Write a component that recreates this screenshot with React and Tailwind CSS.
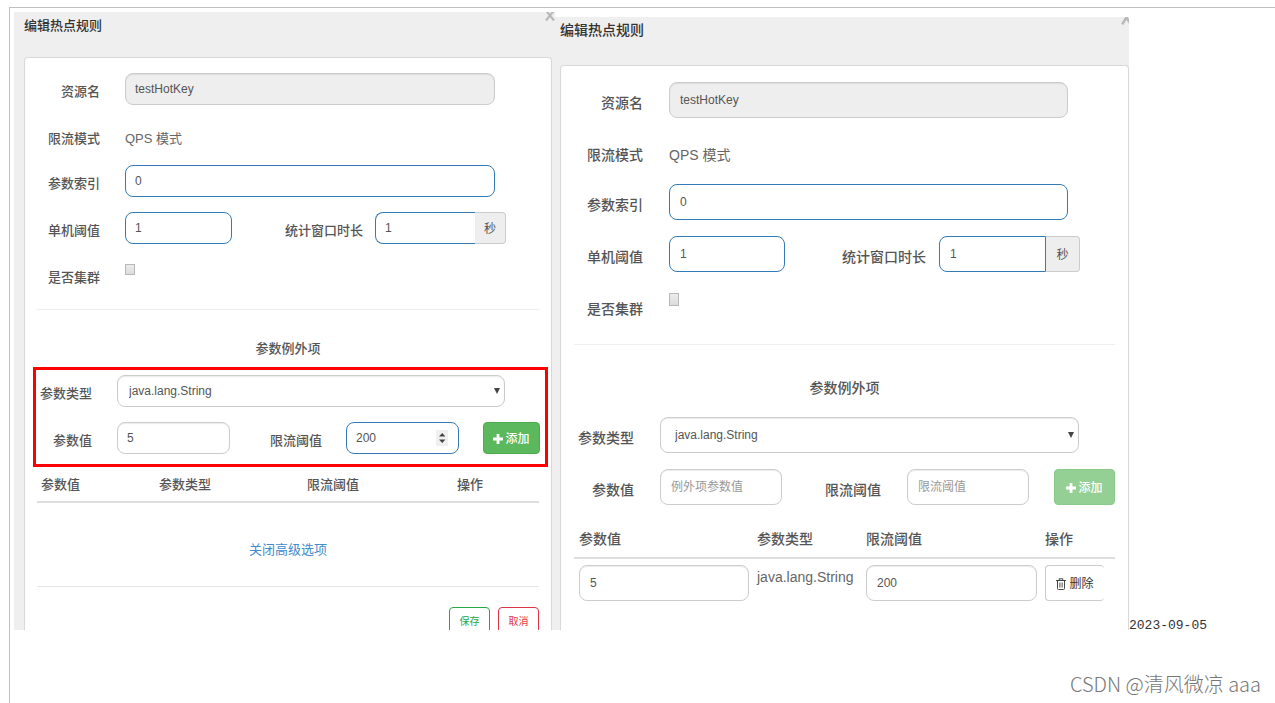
// ============================================================================
// Hot-spot parameter rule dialogs
// File: App.jsx
// ============================================================================

import React, { useId, useState } from 'react';
import clsx from 'clsx';

// Class sets for the two dialog densities
const compact = {
  label: 'pt-[9px] text-[13px]',
  field: 'h-8 px-[9px]',
  rows: 'gap-[15px]',
  textRow: 'h-[30px]',
  labelCol: 'w-[63px]',
  labelGap: 'gap-[25px]',
  endPad: 'pr-11',
  thresholdPad: 'pr-[33px]',
  threshold: 'basis-[195px]',
  windowLabel: 'w-[131px] mr-3',
  windowGroup: 'basis-[131px]',
  addon: 'w-[31px]',
  checkbox: 'mt-[5px] h-[11px] w-[10px]',
  windowInput: 'border-r-0',
};

const regular = {
  label: 'pt-[11px] text-sm',
  field: 'h-9 px-[10px]',
  rows: 'gap-4',
  textRow: 'h-[34px]',
  labelCol: 'w-[69px]',
  labelGap: 'gap-[26px]',
  endPad: 'pr-[47px]',
  thresholdPad: 'pr-[35px]',
  threshold: 'basis-[211px]',
  windowLabel: 'w-[141px] mr-[13px]',
  windowGroup: 'basis-[141px]',
  addon: 'w-[34px]',
  checkbox: 'mt-[5px] h-[13px] w-[10px]',
  windowInput: '',
};

function PlusIcon() {
  return (
    <svg className="h-[10px] w-[10px] shrink-0" viewBox="0 0 10 10" fill="currentColor" aria-hidden="true">
      <path d="M3.6 0h2.8v3.6H10v2.8H6.4V10H3.6V6.4H0V3.6h3.6z" />
    </svg>
  );
}

function TrashIcon() {
  return (
    <svg
      className="h-3 w-[10px] shrink-0"
      viewBox="0 0 10 12"
      fill="none"
      stroke="currentColor"
      strokeWidth="0.9"
      aria-hidden="true"
    >
      <path d="M0 2.5h10M3.2 2.3V.8h3.6v1.5M1.5 2.5v8q0 1 1 1h5q1 0 1-1v-8" />
      <path d="M3.6 4.5v5M5 4.5v5M6.4 4.5v5" strokeWidth="0.6" />
    </svg>
  );
}

function CloseIcon({ className }) {
  return (
    <svg
      className={className}
      viewBox="0 0 10 11"
      preserveAspectRatio="none"
      fill="none"
      stroke="#b9b9b9"
      strokeWidth="2.2"
      aria-hidden="true"
    >
      <path d="M1 0.5l8 10M9 0.5l-8 10" />
    </svg>
  );
}

function Field({ className, active, ...props }) {
  return (
    <input
      type="text"
      className={clsx(
        'block min-w-0 rounded-lg border text-xs text-[#555] outline-none placeholder:text-[#999]',
        active ? 'border-[#337ab7]' : 'border-[#ccc] shadow-[inset_0_1px_1px_rgba(0,0,0,0.08)]',
        props.disabled ? 'bg-[#eee]' : 'bg-white',
        className
      )}
      {...props}
    />
  );
}

function Label({ className, ...props }) {
  return (
    <label
      className={clsx('block shrink-0 text-right leading-5 font-medium whitespace-nowrap text-[#555]', className)}
      {...props}
    />
  );
}

function TypeSelect({ id, className }) {
  return (
    <div className="relative min-w-0 flex-1">
      <select
        id={id}
        className={clsx(
          'block w-full appearance-none rounded-lg border border-[#ccc] bg-white text-xs text-[#555] shadow-[inset_0_1px_1px_rgba(0,0,0,0.08)] outline-none',
          className
        )}
      >
        <option>java.lang.String</option>
        <option>int</option>
        <option>double</option>
      </select>
      <svg
        className="pointer-events-none absolute top-1/2 right-[5px] -mt-[3px] h-[6px] w-[6px]"
        viewBox="0 0 6 6"
        fill="#444"
        aria-hidden="true"
      >
        <path d="M0 0h6L3 6z" />
      </svg>
    </div>
  );
}

function AddButton({ className, ...props }) {
  return (
    <button
      type="button"
      className={clsx(
        'flex shrink-0 items-center justify-center gap-[2px] rounded border border-[#4cae4c] bg-[#5cb85c] pt-[2px] text-xs font-medium text-white disabled:opacity-65',
        className
      )}
      {...props}
    >
      <PlusIcon />
      添加
    </button>
  );
}

// Resource, mode, index, threshold and cluster rows
function RuleFields({ s }) {
  const id = useId();
  const [cluster, setCluster] = useState(false);
  const labelClass = clsx(s.label, s.labelCol);

  return (
    <div className={clsx('flex flex-col', s.rows)}>
      <div className={clsx('flex', s.labelGap, s.endPad)}>
        <Label htmlFor={`${id}-resource`} className={labelClass}>资源名</Label>
        <Field id={`${id}-resource`} defaultValue="testHotKey" disabled className={clsx('flex-1', s.field)} />
      </div>
      <div className={clsx('flex', s.labelGap, s.textRow)}>
        <span className={clsx('block shrink-0 text-right leading-5 font-medium text-[#555]', labelClass)}>限流模式</span>
        <span className={clsx('leading-5 text-[#666]', s.label)}>QPS 模式</span>
      </div>
      <div className={clsx('flex', s.labelGap, s.endPad)}>
        <Label htmlFor={`${id}-index`} className={labelClass}>参数索引</Label>
        <Field id={`${id}-index`} defaultValue="0" active className={clsx('flex-1', s.field)} />
      </div>
      <div className={clsx('flex', s.thresholdPad)}>
        <div className={clsx('flex min-w-0 grow', s.threshold, s.labelGap)}>
          <Label htmlFor={`${id}-count`} className={labelClass}>单机阈值</Label>
          <Field id={`${id}-count`} defaultValue="1" active className={clsx('w-0 flex-1', s.field)} />
        </div>
        <Label htmlFor={`${id}-window`} className={clsx(s.label, s.windowLabel)}>统计窗口时长</Label>
        <div className={clsx('flex min-w-0 grow', s.windowGroup)}>
          <Field
            id={`${id}-window`}
            defaultValue="1"
            active
            className={clsx('w-0 flex-1 rounded-r-none', s.field, s.windowInput)}
          />
          <span
            className={clsx(
              'flex shrink-0 items-center justify-center rounded-r border border-l-0 border-[#ccc] bg-[#eee] pt-[2px] text-xs text-[#555]',
              s.addon
            )}
          >
            秒
          </span>
        </div>
      </div>
      <div className={clsx('flex items-start', s.labelGap, s.textRow)}>
        <Label htmlFor={`${id}-cluster`} className={labelClass}>是否集群</Label>
        <input
          id={`${id}-cluster`}
          type="checkbox"
          checked={cluster}
          onChange={(e) => setCluster(e.target.checked)}
          className={clsx(
            'appearance-none border border-[#b8b8b8] bg-linear-to-b from-[#ececec] to-[#dcdcdc] checked:bg-[#337ab7]',
            s.checkbox
          )}
        />
      </div>
    </div>
  );
}

function EditingDialog() {
  const id = useId();
  const s = compact;

  return (
    <section className="relative min-w-0 flex-[528] overflow-hidden bg-[#efefef] pr-[3px] pl-[10px]">
      <button type="button" aria-label="关闭" className="absolute top-0 right-0">
        <CloseIcon className="-mt-[2px] block h-[11px] w-[10px]" />
      </button>
      <h2 className="pt-1 pb-[21px] text-[13px] leading-5 font-medium text-[#333]">编辑热点规则</h2>

      <div className="rounded-t border border-b-0 border-[#d8d8d8] bg-white px-3 pt-[15px]">
        <RuleFields s={s} />
        <hr className="mt-5 border-[#eee]" />
        <h3 className="mt-[29px] text-center text-[13px] leading-5 font-medium text-[#555]">参数例外项</h3>

        <div className="mt-2 -mr-[9px] -ml-1 flex flex-col gap-[15px] border-[3px] border-[#f00] pt-[5px] pb-[10px]">
          <div className="flex gap-[25px] pr-10">
            <Label htmlFor={`${id}-type`} className={clsx('w-14', s.label)}>参数类型</Label>
            <TypeSelect id={`${id}-type`} className="h-8 pl-[11px]" />
          </div>
          <div className="flex pr-[5px]">
            <Label htmlFor={`${id}-value`} className={clsx('mr-[25px] w-14', s.label)}>参数值</Label>
            <div className="min-w-0 flex-1">
              <Field id={`${id}-value`} defaultValue="5" className={clsx('w-full', s.field)} />
            </div>
            <Label htmlFor={`${id}-limit`} className={clsx('mr-6 w-[92px]', s.label)}>限流阈值</Label>
            <div className="relative min-w-0 flex-1">
              <Field id={`${id}-limit`} defaultValue="200" inputMode="numeric" active className={clsx('w-full', s.field)} />
              <svg
                className="pointer-events-none absolute top-2 right-[11px] h-4 w-3"
                viewBox="0 0 12 16"
                aria-hidden="true"
              >
                <path d="M0 0h12v16H0z" fill="#f0f0f0" />
                <path d="M3 6.5h6.4L6.2 3zM3 9.5h6.4L6.2 13z" fill="#444" />
              </svg>
            </div>
            <AddButton className="ml-6 h-8 w-[57px]" />
          </div>
        </div>

        <table className="mt-2 w-full table-fixed text-left text-[13px] leading-5 text-[#555]">
          <thead>
            <tr className="border-b-2 border-[#ddd]">
              <th className="w-[118px] px-1 pb-[6px] font-medium">参数值</th>
              <th className="w-[148px] px-1 pb-[6px] font-medium">参数类型</th>
              <th className="w-[150px] px-1 pb-[6px] font-medium">限流阈值</th>
              <th className="w-[86px] px-1 pb-[6px] font-medium">操作</th>
            </tr>
          </thead>
        </table>

        <p className="mt-[37px] text-center text-[13px] leading-5">
          <a href="#advanced" className="text-[#428bca]">关闭高级选项</a>
        </p>
        <hr className="mt-[26px] border-[#e5e5e5]" />

        <footer className="mt-5 flex h-[23px] items-start justify-end gap-2 overflow-hidden">
          <button type="button" className="h-7 w-[41px] rounded border border-[#28a745] text-[10px] text-[#28a745]">
            保存
          </button>
          <button type="button" className="h-7 w-[41px] rounded border border-[#dc3545] text-[10px] text-[#dc3545]">
            取消
          </button>
        </footer>
      </div>
    </section>
  );
}

function AddedDialog() {
  const id = useId();
  const s = regular;

  return (
    <section className="relative mt-[5px] flex min-w-0 flex-[569] flex-col overflow-hidden bg-[#efefef] pl-[5px]">
      <button type="button" aria-label="关闭" className="absolute top-0 -right-[3px]">
        <CloseIcon className="-mt-[7px] block h-[15px] w-[11px]" />
      </button>
      <h2 className="pt-[3px] pb-[25px] text-sm leading-5 font-medium text-[#333]">编辑热点规则</h2>

      <div className="flex-1 rounded-t border border-b-0 border-[#d8d8d8] bg-white px-[13px] pt-4">
        <RuleFields s={s} />
        <hr className="mt-[22px] border-[#eee]" />
        <h3 className="mt-[33px] text-center text-sm leading-5 font-medium text-[#555]">参数例外项</h3>

        <div className="mt-[19px] flex flex-col gap-4">
          <div className="flex gap-[26px] pr-9">
            <Label htmlFor={`${id}-type`} className={clsx('w-[60px]', s.label)}>参数类型</Label>
            <TypeSelect id={`${id}-type`} className="h-9 pl-[14px]" />
          </div>
          <div className="flex">
            <Label htmlFor={`${id}-value`} className={clsx('mr-[26px] w-[60px]', s.label)}>参数值</Label>
            <Field id={`${id}-value`} placeholder="例外项参数值" className={clsx('w-0 flex-1', s.field)} />
            <Label htmlFor={`${id}-limit`} className={clsx('mr-[26px] w-[99px]', s.label)}>限流阈值</Label>
            <Field id={`${id}-limit`} placeholder="限流阈值" className={clsx('w-0 flex-1', s.field)} />
            <AddButton disabled className="ml-[25px] h-9 w-[61px]" />
          </div>
        </div>

        <table className="mt-6 w-full table-fixed text-left text-sm leading-5 text-[#555]">
          <thead>
            <tr className="border-b-2 border-[#ddd]">
              <th className="w-[178px] px-[5px] pb-2 font-medium">参数值</th>
              <th className="w-[109px] px-[5px] pb-2 font-medium">参数类型</th>
              <th className="w-[179px] px-[5px] pb-2 font-medium">限流阈值</th>
              <th className="w-[75px] px-[5px] pb-2 font-medium">操作</th>
            </tr>
          </thead>
          <tbody>
            <tr className="align-top">
              <td className="pt-[6px] pr-[3px] pl-[5px]">
                <Field aria-label="参数值" defaultValue="5" className={clsx('w-full', s.field)} />
              </td>
              <td className="px-[5px] pt-2 whitespace-nowrap text-[#666]">java.lang.String</td>
              <td className="pt-[6px] pr-[3px] pl-[5px]">
                <Field aria-label="限流阈值" defaultValue="200" className={clsx('w-full', s.field)} />
              </td>
              <td className="pt-[6px] pr-[11px] pl-[5px]">
                <button
                  type="button"
                  className="flex h-9 w-full items-center justify-center gap-[3px] rounded border border-r-0 border-[#ccc] pt-[2px] text-xs text-[#333]"
                >
                  <TrashIcon />
                  删除
                </button>
              </td>
            </tr>
          </tbody>
        </table>
      </div>
    </section>
  );
}

export default function App() {
  return (
    <div className="flex min-h-screen flex-col overflow-hidden bg-white pt-[7px] pl-[9px] font-['Liberation_Sans','Noto_Sans_CJK_SC',sans-serif]">
      <main className="flex flex-1 flex-col border-t border-l border-[#c0c0c0] pt-1 pl-1">
        <div className="flex">
          <EditingDialog />
          <AddedDialog />
          <time
            dateTime="2023-09-05"
            className="w-[146px] shrink-0 self-end font-['Liberation_Mono',monospace] text-[13px] leading-2 text-[#333]"
          >
            2023-09-05
          </time>
        </div>
        <p className="mt-auto pr-[14px] pb-1 text-right font-['Noto_Sans_CJK_SC',sans-serif] text-xl leading-[30px] font-light text-[#777]">
          CSDN @清风微凉 aaa
        </p>
      </main>
    </div>
  );
}
